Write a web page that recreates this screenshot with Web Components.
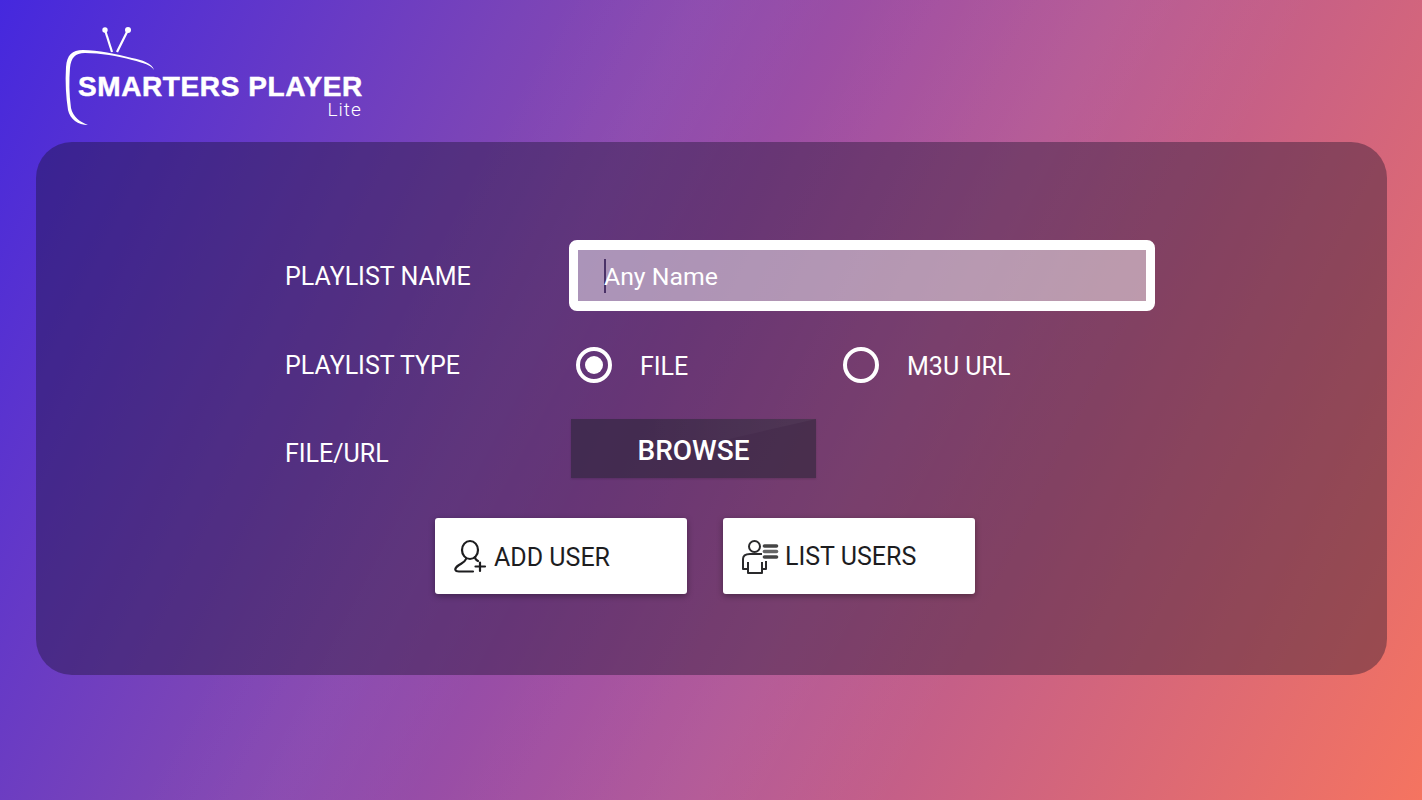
<!DOCTYPE html>
<html>
<head>
<meta charset="utf-8">
<title>Smarters Player Lite</title>
<style>
html, body { margin: 0; height: 100%; }
body { font-family: Roboto, "Liberation Sans", sans-serif; overflow: hidden; }
</style>
</head>
<body>
<app-screen>
  <app-logo slot="header"></app-logo>
  <form-row label="PLAYLIST NAME" shift="1"><text-box>Any Name</text-box></form-row>
  <form-row label="PLAYLIST TYPE" gap="36">
    <radio-opt checked>FILE</radio-opt>
    <radio-opt>M3U URL</radio-opt>
  </form-row>
  <form-row label="FILE/URL" gap="36" shift="5"><browse-btn>BROWSE</browse-btn></form-row>
  <div slot="actions" style="display:contents">
    <action-btn icon="add">ADD USER</action-btn>
    <action-btn icon="list">LIST USERS</action-btn>
  </div>
</app-screen>

<script>
class AppScreen extends HTMLElement {
  constructor() {
    super();
    this.attachShadow({ mode: "open" });
    this.shadowRoot.innerHTML = `
    <style>
    :host {
      display: flex;
      flex-direction: column;
      width: 1422px;
      height: 800px;
      background:
        linear-gradient(118deg, rgba(255,255,255,0) 30%, rgba(255,255,255,.025) 38%, rgba(255,255,255,0) 46%, rgba(255,255,255,.03) 60%, rgba(255,255,255,0) 72%),
        linear-gradient(116deg, #4528de 0%, #7a44b8 29%, #a5519f 52%, #cc6282 75%, #f57460 100%);
    }
    header { height: 142px; flex: none; }
    .panel {
      margin: 0 35.5px 0 36px;
      height: 533px;
      box-sizing: border-box;
      padding: 98px 0 0 249px;
      border-radius: 36px;
      background: rgba(20, 15, 40, .38);
    }
    .actions {
      display: flex;
      gap: 36px;
      margin: 40px 0 0 150px;
    }
    </style>
    <header><slot name="header"></slot></header>
    <div class="panel">
      <slot></slot>
      <div class="actions"><slot name="actions"></slot></div>
    </div>
    `;
  }
}
customElements.define("app-screen", AppScreen);

class AppLogo extends HTMLElement {
  constructor() {
    super();
    this.attachShadow({ mode: "open" });
    this.shadowRoot.innerHTML = `
    <style>
    :host { display: block; position: relative; height: 142px; color: #fff; }
    svg { position: absolute; left: 60px; top: 22px; }
    .name {
      position: absolute; left: 78px; top: 75px;
      font: bold 28px/24px "Liberation Sans", sans-serif;
      letter-spacing: .6px;
      -webkit-text-stroke: .5px #fff;
      white-space: nowrap;
    }
    .lite {
      position: absolute; left: 327.5px; top: 101px;
      font: 300 19px/18px Roboto, sans-serif;
      letter-spacing: 1px;
    }
    </style>
    <svg width="100" height="106" viewBox="0 0 100 106" fill="none" stroke="#fff">
      <path d="M52 30 L45 8" stroke-width="2.2"/>
      <path d="M57 30 L68 8" stroke-width="2.2"/>
      <circle cx="45" cy="8" r="2.7" fill="#fff" stroke="none"/>
      <circle cx="68" cy="8" r="3" fill="#fff" stroke="none"/>
      <path fill="#fff" stroke="none" d="M94 48 C92 41 82 38 72 36 C56 32 38 28 23 28 C12 28 7 33 6 45 C5 60 6 75 8 88 C10 97 18 103 28 103 C20 100 13 95 11 86 C9 72 9 58 10 46 C11 36 15 31 25 31 C40 31 58 34 72 38 C84 41 91 43 94 48 Z"/>
    </svg>
    <div class="name">SMARTERS PLAYER</div>
    <div class="lite">Lite</div>
    `;
  }
}
customElements.define("app-logo", AppLogo);

class FormRow extends HTMLElement {
  constructor() {
    super();
    this.attachShadow({ mode: "open" });
    const gap = this.getAttribute("gap") || 0;
    const shift = this.getAttribute("shift") || 0;
    this.shadowRoot.innerHTML = `
    <style>
    :host {
      display: grid;
      grid-template-columns: 284px 586px;
      margin-top: ${gap}px;
      color: #fff;
      font-size: 25px;
    }
    .label { align-self: center; padding-top: ${shift * 2}px; }
    .field { display: flex; }
    </style>
    <div class="label">${this.getAttribute("label")}</div>
    <div class="field"><slot></slot></div>
    `;
  }
}
customElements.define("form-row", FormRow);

class TextBox extends HTMLElement {
  constructor() {
    super();
    this.attachShadow({ mode: "open" });
    this.shadowRoot.innerHTML = `
    <style>
    :host {
      display: block;
      width: 586px;
      height: 71px;
      box-sizing: border-box;
      border: solid #fff;
      border-width: 10px 9px;
      border-radius: 8px;
      background: rgba(255,255,255,.47);
      background-clip: padding-box;
      color: #fff;
      font-size: 24.8px;
    }
    .inner { display: flex; align-items: center; height: 100%; padding-left: 26px; }
    .caret { width: 2px; height: 34px; background: #4b3268; margin-right: -2px; }
    .text { padding-top: 2px; }
    </style>
    <div class="inner"><span class="caret"></span><span class="text"><slot></slot></span></div>
    `;
  }
}
customElements.define("text-box", TextBox);

class RadioOpt extends HTMLElement {
  constructor() {
    super();
    this.attachShadow({ mode: "open" });
    this.shadowRoot.innerHTML = `
    <style>
    :host { display: flex; align-items: center; width: 267px; padding-left: 6.5px; box-sizing: border-box; }
    .ring {
      width: 36px; height: 36px; box-sizing: border-box;
      border: 4px solid #fff; border-radius: 50%;
      display: flex; align-items: center; justify-content: center;
      margin-right: 28.5px;
    }
    .dot { width: 18px; height: 18px; border-radius: 50%; background: #fff; }
    span { padding-top: 2px; }
    </style>
    <div class="ring">${this.hasAttribute("checked") ? '<div class="dot"></div>' : ""}</div>
    <span><slot></slot></span>
    `;
  }
}
customElements.define("radio-opt", RadioOpt);

class BrowseBtn extends HTMLElement {
  constructor() {
    super();
    this.attachShadow({ mode: "open" });
    this.shadowRoot.innerHTML = `
    <style>
    :host {
      position: relative;
      display: flex;
      align-items: center;
      justify-content: center;
      margin-left: 2px;
      width: 245px;
      height: 59px;
      box-sizing: border-box;
      padding-top: 3px;
      background: rgba(40, 36, 52, .56);
      box-shadow: 0 1px 2px rgba(0,0,0,.15);
      color: #fff;
      font-size: 28px;
      font-weight: 500;
    }
    :host::before {
      content: "";
      position: absolute;
      inset: 0;
      background: linear-gradient(to right, rgba(255,255,255,0) 30%, rgba(255,255,255,.04));
      clip-path: polygon(70px 0, 245px 0, 70px 40px);
    }
    </style>
    <slot></slot>
    `;
  }
}
customElements.define("browse-btn", BrowseBtn);

const icons = {
  add: `<svg width="34" height="34" viewBox="0 0 34 34" fill="none" stroke="#1d1d1f" stroke-width="2.2" stroke-linecap="round">
    <ellipse cx="16" cy="11" rx="8" ry="9"/>
    <path d="M12 20 C11 23 8 24 5 26 C2 28 1 30 1.5 31 C2 32.5 3 32.5 5 32.5 H19"/>
    <path d="M21 18 C21 20 22 21 24 22"/>
    <path d="M26 23.5 V32 M21.5 27.5 H31"/>
  </svg>`,
  list: `<svg width="37" height="37" viewBox="0 0 37 37" fill="none" stroke="#2a2a2c" stroke-width="2" stroke-linejoin="round">
    <circle cx="12.5" cy="8.5" r="5.5"/>
    <path d="M8 16 C3 16 1 18 1 21 V31 H6 V24 M6 31 V35 H20 V24 M20 31 H24 V23"/>
    <path d="M8 16 H20"/>
    <g stroke-width="3.6" stroke-linecap="round">
      <path d="M22.5 8 H34.5" stroke="#444"/>
      <path d="M22.5 13.5 H34.5" stroke="#666"/>
      <path d="M22.5 19 H34.5" stroke="#444"/>
    </g>
  </svg>`
};

class ActionBtn extends HTMLElement {
  constructor() {
    super();
    this.attachShadow({ mode: "open" });
    const list = this.getAttribute("icon") == "list";
    this.shadowRoot.innerHTML = `
    <style>
    :host {
      display: flex;
      align-items: center;
      gap: 6px;
      width: 252px;
      height: 76px;
      box-sizing: border-box;
      padding-left: 19px;
      background: #fff;
      border-radius: 3px;
      box-shadow: 0 2px 6px rgba(0,0,0,.35);
      color: #1d1d1f;
      font-size: 25px;
    }
    svg { flex: none; }
    span { padding-top: ${list ? 0 : 2}px; }
    </style>
    ${icons[this.getAttribute("icon")]}
    <span><slot></slot></span>
    `;
  }
}
customElements.define("action-btn", ActionBtn);
</script>
</body>
</html>
